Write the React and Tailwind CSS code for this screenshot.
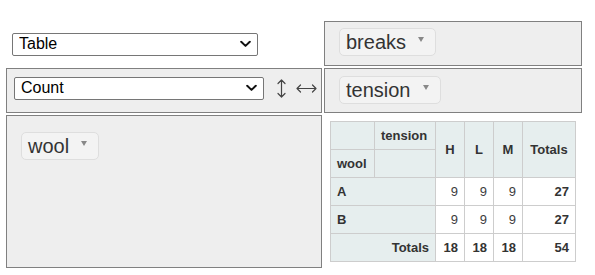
import React from "react";

const font = { fontFamily: '"Liberation Sans", Arial, sans-serif' };

function Chevron() {
  return (
    <svg className="pointer-events-none absolute right-[7px] top-1/2 -translate-y-1/2" width="11" height="7" viewBox="0 0 11 7" fill="none">
      <path d="M1.2 1.2 L5.5 5.4 L9.8 1.2" stroke="#111" strokeWidth="2" strokeLinecap="round" strokeLinejoin="round" />
    </svg>
  );
}

function Select({ value, className }) {
  return (
    <div className={"relative " + className}>
      <select
        defaultValue={value}
        className="appearance-none w-full h-full border border-[#767676] rounded-[2px] bg-white pl-[6px] text-[16px] leading-none text-black"
        style={font}
      >
        <option>{value}</option>
      </select>
      <Chevron />
    </div>
  );
}

function Pill({ label }) {
  return (
    <div className="inline-flex items-center h-[28px] border border-[#dedede] bg-[#f3f3f3] rounded-[5px] pl-[6px] pr-[11px] text-[20px] text-[#333]">
      <span className="leading-none">{label}</span>
      <svg className="ml-[12px] mb-[5px]" width="6" height="5" viewBox="0 0 6 5">
        <path d="M0 0 H6 L3 5 Z" fill="#888" />
      </svg>
    </div>
  );
}

const th = "bg-[#e6eeee] border-r border-b border-[#cdcdcd] flex items-center text-[13px] font-bold text-[#333]";
const td = "bg-white border-r border-b border-[#cdcdcd] flex items-center justify-end pr-[6px] text-[13px] text-[#3d3d3d]";

function PivotTable() {
  const rows = [
    ["A", 9, 9, 9, 27],
    ["B", 9, 9, 9, 27],
  ];
  return (
    <div className="grid grid-cols-[44px_61px_29px_29px_29px_53px] grid-rows-[28px_28px_28px_28px_28px] border-l border-t border-[#cdcdcd] w-[246px]">
      <div className={th}></div>
      <div className={th + " pl-[6px]"}>tension</div>
      <div className={th + " row-span-2 justify-center"}>H</div>
      <div className={th + " row-span-2 justify-center"}>L</div>
      <div className={th + " row-span-2 justify-center"}>M</div>
      <div className={th + " row-span-2 justify-center"}>Totals</div>
      <div className={th + " pl-[6px]"}>wool</div>
      <div className={th}></div>
      {rows.map((r) => (
        <React.Fragment key={r[0]}>
          <div className={th + " col-span-2 pl-[6px]"}>{r[0]}</div>
          <div className={td}>{r[1]}</div>
          <div className={td}>{r[2]}</div>
          <div className={td}>{r[3]}</div>
          <div className={td + " font-bold text-[#333]"}>{r[4]}</div>
        </React.Fragment>
      ))}
      <div className={th + " col-span-2 justify-end pr-[6px]"}>Totals</div>
      <div className={td + " font-bold text-[#333]"}>18</div>
      <div className={td + " font-bold text-[#333]"}>18</div>
      <div className={td + " font-bold text-[#333]"}>18</div>
      <div className={td + " font-bold text-[#333]"}>54</div>
    </div>
  );
}

export default function App() {
  return (
    <div className="w-[595px] h-[275px] bg-white pt-[21px] pl-[6px]" style={font}>
      <div className="grid grid-cols-[316px_258px] grid-rows-[45px_45px_153px] gap-[2px]">
        {/* renderer */}
        <div className="flex items-center pl-[6px]">
          <Select value="Table" className="w-[246px] h-[23px]" />
        </div>
        {/* column attrs */}
        <div className="border border-[#808080] bg-[#eeeeee] pl-[14px] pt-[6px]">
          <Pill label="breaks" />
        </div>
        {/* aggregator */}
        <div className="border border-[#808080] bg-[#eeeeee] flex items-start pt-[7px] pl-[7px]">
          <Select value="Count" className="w-[250px] h-[23px]" />
          {/* row order ↕ */}
          <svg className="ml-[13px] mt-[3px] cursor-pointer" width="9" height="19" viewBox="0 0 9 19" fill="none">
            <path d="M4.5 1 V18 M1 4.5 L4.5 1 L8 4.5 M1 14.5 L4.5 18 L8 14.5" stroke="#444" strokeWidth="1.2" strokeLinecap="round" strokeLinejoin="round" />
          </svg>
          {/* col order ↔ */}
          <svg className="ml-[10px] mt-[8px] cursor-pointer" width="21" height="9" viewBox="0 0 21 9" fill="none">
            <path d="M1 4.5 H20 M4.5 1 L1 4.5 L4.5 8 M16.5 1 L20 4.5 L16.5 8" stroke="#444" strokeWidth="1.2" strokeLinecap="round" strokeLinejoin="round" />
          </svg>
        </div>
        {/* row attrs header */}
        <div className="border border-[#808080] bg-[#eeeeee] pl-[14px] pt-[7px]">
          <Pill label="tension" />
        </div>
        {/* row axis */}
        <div className="border border-[#808080] bg-[#eeeeee] pl-[14px] pt-[16px]">
          <Pill label="wool" />
        </div>
        {/* output */}
        <div className="pl-[6px] pt-[6px]">
          <PivotTable />
        </div>
      </div>
    </div>
  );
}
